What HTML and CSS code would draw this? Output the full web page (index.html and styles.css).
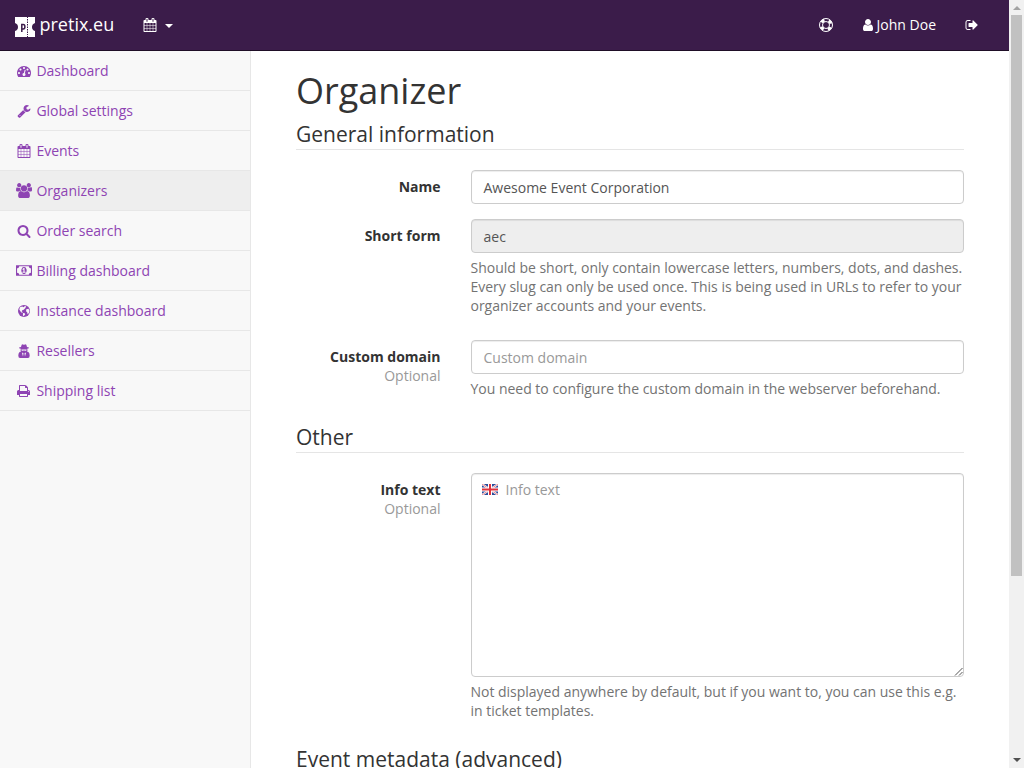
FILE: index.html
```html
<!DOCTYPE html>
<html lang="en">
<head>
<meta charset="utf-8">
<title>Organizer</title>
<link rel="stylesheet" href="styles.css">
</head>
<body>
<svg class="defs" aria-hidden="true">
<symbol id="calendar" viewBox="0 0 1792 1792"><path d="M192 1664h288v-288h-288v288zm352 0h320v-288h-320v288zm-352-352h288v-320h-288v320zm352 0h320v-320h-320v320zm-352-384h288v-288h-288v288zm736 736h320v-288h-320v288zm-384-736h320v-288h-320v288zm768 736h288v-288h-288v288zm-384-352h320v-320h-320v320zm-352-864v-288q0-13-9.5-22.5t-22.5-9.5h-64q-13 0-22.5 9.5t-9.5 22.5v288q0 13 9.5 22.5t22.5 9.5h64q13 0 22.5-9.5t9.5-22.5zm736 864h288v-320h-288v320zm-384-384h320v-288h-320v288zm384 0h288v-288h-288v288zm32-480v-288q0-13-9.5-22.5t-22.5-9.5h-64q-13 0-22.5 9.5t-9.5 22.5v288q0 13 9.5 22.5t22.5 9.5h64q13 0 22.5-9.5t9.5-22.5zm384-64v1280q0 52-38 90t-90 38h-1408q-52 0-90-38t-38-90v-1280q0-52 38-90t90-38h128v-96q0-66 47-113t113-47h64q66 0 113 47t47 113v96h384v-96q0-66 47-113t113-47h64q66 0 113 47t47 113v96h128q52 0 90 38t38 90z"/></symbol>
</svg>
<div class="app">
<div class="page">
<nav class="navbar">
  <a class="brand"><svg class="logo" viewBox="0 0 20 20"><path fill="#fff" fill-rule="evenodd" d="M0 0h12v1h1V0h7v6q-3 1-3 4t3 4v6h-7v-1h-1v1H0v-6q3-1 3-4T0 6z"/><path d="M12.5 2v16" stroke="#3b1c4a" stroke-dasharray="1.5 1"/><path fill="none" stroke="#3b1c4a" stroke-width="1.5" d="M6.800 15V6.800M6.800 7.500h1.400q1.700 0 1.700 2.200T8.200 12H6.800"/></svg><span>pretix.eu</span></a>
  <a class="event-picker"><svg class="icon"><use href="#calendar"/></svg><i class="caret"></i></a>
  <div class="nav-right">
    <a><svg class="icon" viewBox="0 0 14 14"><circle cx="7" cy="7" r="6.500" fill="none" stroke="currentColor"/><circle cx="7" cy="7" r="3.500" fill="none" stroke="currentColor"/><circle cx="7" cy="7" r="5" fill="none" stroke="currentColor" stroke-width="3" stroke-dasharray="3.400 4.454" stroke-dashoffset="-2.227"/></svg></a>
    <a class="account"><svg class="icon user" viewBox="256 0 1280 1792"><path d="M1536 1399q0 109-62.5 187t-150.5 78h-854q-88 0-150.5-78t-62.5-187q0-85 8.5-160.5t31.5-152 58.5-131 94-89 134.5-34.5q131 128 313 128t313-128q76 0 134.5 34.5t94 89 58.5 131 31.5 152 8.5 160.5zm-256-887q0 159-112.5 271.5t-271.5 112.5-271.5-112.5-112.5-271.5 112.5-271.5 271.5-112.5 271.5 112.5 112.5 271.5z"/></svg><span>John Doe</span></a>
    <a><svg class="icon" viewBox="0 0 1792 1792"><path d="M704 1440q0 4 1 20t.5 26.5-3 23.5-10 19.5-20.5 6.5h-320q-119 0-203.5-84.5t-84.5-203.5v-704q0-119 84.5-203.5t203.5-84.5h320q13 0 22.5 9.5t9.5 22.5q0 4 1 20t.5 26.5-3 23.5-10 19.5-20.5 6.5h-320q-66 0-113 47t-47 113v704q0 66 47 113t113 47h312l11.5 1 11.5 3 8 5.5 7 9 2 13.5zm928-544q0 26-19 45l-544 544q-19 19-45 19t-45-19-19-45v-288h-448q-26 0-45-19t-19-45v-384q0-26 19-45t45-19h448v-288q0-26 19-45t45-19 45 19l544 544q19 19 19 45z"/></svg></a>
  </div>
</nav>
<div class="columns">
<aside class="sidebar">
  <a><svg class="icon" viewBox="0 0 1792 1792"><path d="M384 1152q0-53-37.5-90.5t-90.5-37.5-90.5 37.5-37.5 90.5 37.5 90.5 90.5 37.5 90.5-37.5 37.5-90.5zm192-448q0-53-37.5-90.5t-90.5-37.5-90.5 37.5-37.5 90.5 37.5 90.5 90.5 37.5 90.5-37.5 37.5-90.5zm428 481l101-382q6-26-7.5-48.5t-38.5-29.5-48 6.5-30 39.5l-101 382q-60 5-107 43.5t-63 98.5q-20 77 20 146t117 89 146-20 89-117q16-60-6-117t-72-91zm660-33q0-53-37.5-90.5t-90.5-37.5-90.5 37.5-37.5 90.5 37.5 90.5 90.5 37.5 90.5-37.5 37.5-90.5zm-640-640q0-53-37.5-90.5t-90.5-37.5-90.5 37.5-37.5 90.5 37.5 90.5 90.5 37.5 90.5-37.5 37.5-90.5zm448 192q0-53-37.5-90.5t-90.5-37.5-90.5 37.5-37.5 90.5 37.5 90.5 90.5 37.5 90.5-37.5 37.5-90.5zm320 448q0 261-141 483-19 29-54 29h-1402q-35 0-54-29-141-221-141-483 0-182 71-348t191-286 286-191 348-71 348 71 286 191 191 286 71 348z"/></svg><span>Dashboard</span></a>
  <a><svg class="icon" viewBox="0 0 1792 1792"><path d="M448 1472q0-26-19-45t-45-19-45 19-19 45 19 45 45 19 45-19 19-45zm644-420l-682 682q-37 37-90 37-52 0-91-37l-106-108q-38-36-38-90 0-53 38-91l681-681q39 98 114.5 173.5t173.5 114.5zm634-435q0 39-23 106-47 134-164.5 217.5t-258.5 83.5q-185 0-316.5-131.5t-131.5-316.5 131.5-316.5 316.5-131.5q58 0 121.5 16.5t107.5 46.5q16 11 16 28t-16 28l-293 169v224l193 107q5-3 79-48.5t135.5-81 70.5-35.5q15 0 23.5 10t8.5 25z"/></svg><span>Global settings</span></a>
  <a><svg class="icon"><use href="#calendar"/></svg><span>Events</span></a>
  <a class="active"><svg class="icon wide" viewBox="0 0 1920 1792"><path d="M593 896q-162 5-265 128h-134q-82 0-138-40.5t-56-118.5q0-353 124-353 6 0 43.5 21t97.5 42.5 119 21.5q67 0 133-23-5 37-5 66 0 159 93 293zm1071 637q0 120-73 189.5t-194 69.5h-874q-121 0-194-69.5t-73-189.5q0-53 3.5-103.5t14-109 26.5-108.5 43-97.5 62-81 85.5-53.5 111.5-20q10 0 43 21.5t73 48 107 48 135 21.5 135-21.5 107-48 73-48 43-21.5q61 0 111.5 20t85.5 53.5 62 81 43 97.5 26.5 108.5 14 109 3.5 103.5zm-1024-1277q0 106-75 181t-181 75-181-75-75-181 75-181 181-75 181 75 75 181zm704 384q0 159-112.5 271.5t-271.5 112.5-271.5-112.5-112.5-271.5 112.5-271.5 271.5-112.5 271.5 112.5 112.5 271.5zm576 225q0 78-56 118.5t-138 40.5h-134q-103-123-265-128 93-134 93-293 0-29-5-66 66 23 133 23 59 0 119-21.5t97.5-42.5 43.5-21q124 0 124 353zm-128-609q0 106-75 181t-181 75-181-75-75-181 75-181 181-75 181 75 75 181z"/></svg><span>Organizers</span></a>
  <a><svg class="icon" viewBox="0 0 1792 1792"><path d="M1216 832q0-185-131.5-316.5t-316.5-131.5-316.5 131.5-131.5 316.5 131.5 316.5 316.5 131.5 316.5-131.5 131.5-316.5zm512 832q0 52-38 90t-90 38q-54 0-90-38l-343-342q-179 124-399 124-143 0-273.5-55.5t-225-150-150-225-55.5-273.5 55.5-273.5 150-225 225-150 273.5-55.5 273.5 55.5 225 150 150 225 55.5 273.5q0 220-124 399l343 343q37 37 37 90z"/></svg><span>Order search</span></a>
  <a><svg class="icon wide" viewBox="0 0 1920 1792"><path d="M768 1152h384v-96h-128v-448h-114l-148 137 77 80q42-37 55-57h2v288h-128v96zm512-256q0 70-21 142t-59.5 134-101.5 101-138 39-138-39-101.5-101-59.5-134-21-142 21-142 59.5-134 101.5-101 138-39 138 39 101.5 101 59.5 134 21 142zm512 256v-512q-106 0-181-75t-75-181h-1152q0 106-75 181t-181 75v512q106 0 181 75t75 181h1152q0-106 75-181t181-75zm128-832v1152q0 26-19 45t-45 19h-1792q-26 0-45-19t-19-45v-1152q0-26 19-45t45-19h1792q26 0 45 19t19 45z"/></svg><span>Billing dashboard</span></a>
  <a><svg class="icon" viewBox="0 0 14 14"><circle cx="7" cy="7" r="6"/><path fill="#f8f8f8" d="M3 3.200L5.200 2.500l1.300.8 1.500-1.300 1.200.4-1 1.800-1.500 1.500-1.400.6-.6 1 1 .9-.6.7-1.600-1.300L2.300 5.500zM9.300 5.300l2.200-.6 1 2-.6 2.300-1.300 1.200-.4-2-1.200-1zM6 8.900l1.700.4.5 1-1.500 2-.8-1z"/></svg><span>Instance dashboard</span></a>
  <a><svg class="icon" viewBox="0 0 14 14"><path d="M4.600.900Q5 .200 5.800.400L7 .800 8.200.400Q9 .200 9.400.900L10 3l1.900.500v.800l-1.700.500.300 1.700-.5 1.100 1.400.4q1.300 1.300 1.300 3.500 0 2.500-1.700 2.500H3q-1.700 0-1.700-2.500 0-2.200 1.300-3.500L4 7.600l-.5-1.100.300-1.700-1.700-.5v-.8L4 3z"/><path fill="#f8f8f8" d="M4.400 5.400h5.200v.5l-.5.900H7.800L7 6.200l-.8.600H4.900l-.5-.9zM4.900 8.500l1.600.7-.5 3.200zM9.100 8.500l-1.600.7.5 3.200z"/></svg><span>Resellers</span></a>
  <a><svg class="icon" viewBox="64 0 1792 1792"><path d="M448 1536h896v-256h-896v256zm0-640h896v-384h-160q-40 0-68-28t-28-68v-160h-640v640zm1152 64q0-26-19-45t-45-19-45 19-19 45 19 45 45 19 45-19 19-45zm128 0v416q0 13-9.500 22.500t-22.500 9.500h-224v160q0 40-28 68t-68 28h-960q-40 0-68-28t-28-68v-160h-224q-13 0-22.500-9.500t-9.500-22.500v-416q0-79 56.500-135.500t135.500-56.500h64v-544q0-40 28-68t68-28h672q40 0 88 20t76 48l152 152q28 28 48 76t20 88v256h64q79 0 135.500 56.500t56.500 135.500z"/></svg><span>Shipping list</span></a>
</aside>
<main class="content">
  <h1>Organizer</h1>
  <h2>General information</h2>
  <div class="row">
    <div class="label"><b>Name</b></div>
    <div class="field"><div class="input">Awesome Event Corporation</div></div>
  </div>
  <div class="row short">
    <div class="label"><b>Short form</b></div>
    <div class="field"><div class="input disabled">aec</div><p>Should be short, only contain lowercase letters, numbers, dots, and dashes. Every slug can only be used once. This is being used in URLs to refer to your organizer accounts and your events.</p></div>
  </div>
  <div class="row domain">
    <div class="label"><b>Custom domain</b><span>Optional</span></div>
    <div class="field"><div class="input empty">Custom domain</div><p>You need to configure the custom domain in the webserver beforehand.</p></div>
  </div>
  <h2>Other</h2>
  <div class="row info">
    <div class="label"><b>Info text</b><span>Optional</span></div>
    <div class="field"><div class="input empty area"><svg class="flag" viewBox="0 0 16 11"><path fill="#2a4b9b" d="M0 0h16v11H0z"/><path stroke="#fff" stroke-width="2" d="M0 0l16 11M16 0L0 11"/><path stroke="#e0525c" stroke-width=".7" d="M0 0l16 11M16 0L0 11"/><path stroke="#fff" stroke-width="4" d="M8 0v11M0 5.500h16"/><path stroke="#e0323c" stroke-width="2" d="M8 0v11M0 5.500h16"/></svg><span>Info text</span><svg class="grip" viewBox="0 0 9 9"><path d="M1 8.500L8.500 1M5 8.500L8.500 5" stroke="#555" fill="none"/></svg></div><p>Not displayed anywhere by default, but if you want to, you can use this e.g. in ticket templates.</p></div>
  </div>
  <h2>Event metadata (advanced)</h2>
</main>
</div>
</div>
<div class="scrollbar"><i class="up"></i><div class="thumb"></div><i class="down"></i></div>
</div>
</body>
</html>
```
FILE: styles.css
```css
* { box-sizing: border-box; }
body { margin: 0; font: 14px/19px "Open Sans", sans-serif; color: #333; background: #fff; }
.defs { display: none; }
.app { display: flex; width: 1024px; height: 768px; overflow: hidden; }
.page { display: flex; flex-direction: column; width: 1009px; }
.icon { width: 14px; height: 14px; margin-top: 1px; flex: none; fill: currentColor; }
.navbar { display: flex; height: 51px; flex: none; padding-bottom: 1px; background: #3b1c4a; border-bottom: 1px solid #1f0e27; color: #fff; }
.brand { display: flex; align-items: center; padding-left: 15px; gap: 4.5px; font-size: 18px; line-height: 25px; }
.logo { width: 20px; height: 20px; margin-top: 5px; }
.event-picker { display: flex; align-items: center; margin-left: 29px; gap: 8px; }
.caret { border: 4px solid transparent; border-top-color: #fff; border-bottom: 0; margin-top: 3px; }
.nav-right { display: flex; margin-left: auto; padding-right: 30px; gap: 30px; }
.nav-right a { display: flex; align-items: center; gap: 4px; }
.nav-right .account { margin-right: -1px; }
.icon.user { width: 10px; }
.columns { display: flex; flex: 1; min-height: 0; }
.sidebar { width: 251px; flex: none; background: #f8f8f8; border-right: 1px solid #e7e7e7; color: #8e44b3; }
.sidebar a { display: flex; align-items: center; height: 40px; padding-left: 17px; gap: 5.4px; border-bottom: 1px solid #e7e7e7; }
.sidebar .active { background: #eee; }
.icon.wide { width: 16px; height: 15px; margin: 0 -1px; }
.content { width: 758px; padding: 15px 45px 0; overflow: hidden; }
h1 { margin: 0 0 5px; font-size: 36px; line-height: 49px; font-weight: 400; }
h2 { margin: 0 0 20px; height: 30px; font-size: 21px; line-height: 29px; font-weight: 400; border-bottom: 1px solid #e5e5e5; }
.row { display: flex; gap: 30px; height: 49px; }
.row.short { height: 121px; }
.row.domain { height: 83px; }
.row.info { height: 272px; }
.label { width: 144.5px; padding-top: 7px; text-align: right; }
.label b, .label span { display: block; }
.label span { color: #999; }
.field { width: 493.5px; }
.input { display: flex; height: 34px; padding: 7px 12px; border: 1px solid #ccc; border-radius: 4px; box-shadow: inset 0 1px 1px rgba(0,0,0,.075); color: #555; }
.input.disabled { background: #eee; }
.input.empty { color: #999; }
.input.area { position: relative; height: 204px; padding: 6px 10px; gap: 8px; }
.flag { width: 16px; height: 11px; margin-top: 4px; }
.grip { position: absolute; right: 0; bottom: 0; width: 9px; height: 9px; }
.field p { margin: 5px 0 0; color: #737373; letter-spacing: -.012px; }
.scrollbar { display: flex; flex-direction: column; align-items: center; width: 15px; background: #f1f1f1; }
.thumb { width: 11px; height: 561px; margin-top: 5px; background: #c1c1c1; }
.up, .down { border: 4px solid transparent; }
.up { border-top: 0; border-bottom-color: #a3a3a3; margin-top: 6px; }
.down { border-bottom: 0; border-top-color: #505050; margin: auto 0 6px; }
```
